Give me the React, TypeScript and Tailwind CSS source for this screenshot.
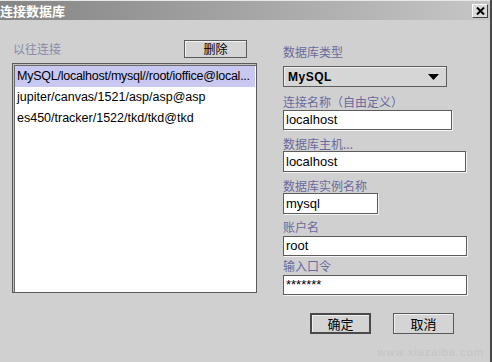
import React from "react";

const cjk = { fontFamily: '"Noto Sans CJK SC", "Noto Sans", sans-serif' };
const latin = { fontFamily: '"Liberation Sans", Arial, "Noto Sans CJK SC", sans-serif' };

function Label({ children, mt }: { children: React.ReactNode; mt: string }) {
  return (
    <div className={`${mt} h-[14px] text-[12px] leading-[14px] text-[#6a6a9c]`} style={cjk}>
      {children}
    </div>
  );
}

function Field({ value, w, h, mt }: { value: string; w: string; h: string; mt: string }) {
  return (
    <div
      className={`${mt} ${w} ${h} bg-white border border-[#5c5c5c] shadow-[1px_1px_0_#f4f4f4] flex items-center pl-[2px] text-[13px] text-black`}
      style={latin}
    >
      {value}
    </div>
  );
}

export default function App() {
  return (
    <div className="w-[492px] h-[362px] bg-[#d0d0d0] flex flex-col border-r-2 border-[#4a4a4a] relative overflow-hidden">
      {/* title bar */}
      <div className="h-[20px] flex items-center justify-between bg-gradient-to-r from-[#858585] to-[#c6c6c6] border-t border-[#e8e8e8]">
        <span className="text-white font-bold text-[13px] leading-[19px]" style={cjk}>
          连接数据库
        </span>
        <div className="mr-[2px] w-[16px] h-[14px] bg-[#dadada] border border-t-white border-l-white border-r-[#404040] border-b-[#404040] flex items-center justify-center">
          <svg width="9" height="8" viewBox="0 0 9 8">
            <path d="M1 0.5 L8 7.5 M8 0.5 L1 7.5" stroke="#000" strokeWidth="2" />
          </svg>
        </div>
      </div>

      {/* body */}
      <div className="flex flex-1">
        {/* left */}
        <div className="w-[257px] pl-[12px] pt-[20px] flex flex-col">
          <div className="flex items-center justify-between h-[18px]">
            <span className="text-[12px] text-[#8a8aa8] ml-[1px]" style={cjk}>
              以往连接
            </span>
            <button
              className="w-[63px] h-[18px] bg-[#d4d4d4] border border-[#5a5a5a] shadow-[inset_1px_1px_0_#f2f2f2] text-[12px] text-black flex items-center justify-center mr-[10px]"
              style={cjk}
            >
              删除
            </button>
          </div>
          <div className="mt-[5px] w-[245px] h-[230px] bg-white border border-[#5a5a5a] shadow-[inset_1px_1px_0_#c0c0c0,inset_2px_2px_0_#6a6a6a] pt-[2px] pl-[2px] text-[12.5px] text-black" style={latin}>
            <div className="h-[21px] bg-[#c8c8f0] flex items-center pl-[2px] whitespace-nowrap overflow-hidden mr-[1px] tracking-[-0.25px]">
              MySQL/localhost/mysql//root/ioffice@local...
            </div>
            <div className="h-[21px] flex items-center pl-[2px]">jupiter/canvas/1521/asp/asp@asp</div>
            <div className="h-[21px] flex items-center pl-[2px]">es450/tracker/1522/tkd/tkd@tkd</div>
          </div>
        </div>

        {/* right */}
        <div className="ml-[26px] flex flex-col">
          <Label mt="mt-[25px]">数据库类型</Label>
          <div
            className="mt-[7px] w-[164px] h-[21px] bg-[#d6d6d6] border border-[#5c5c5c] shadow-[inset_1px_1px_0_#f0f0f0] flex items-center justify-between pl-[4px] pr-[7px] text-[12px] text-black"
            style={latin}
          >
            <span className="font-bold tracking-[0.5px]">MySQL</span>
            <svg width="11" height="6" viewBox="0 0 11 6">
              <path d="M0 0 H11 L5.5 6 Z" fill="#000" />
            </svg>
          </div>
          <Label mt="mt-[8px]">连接名称（自由定义）</Label>
          <Field mt="mt-[1px]" w="w-[169px]" h="h-[20px]" value="localhost" />
          <Label mt="mt-[7px]">数据库主机...</Label>
          <Field mt="mt-0" w="w-[183px]" h="h-[21px]" value="localhost" />
          <Label mt="mt-[7px]">数据库实例名称</Label>
          <Field mt="mt-0" w="w-[95px]" h="h-[21px]" value="mysql" />
          <Label mt="mt-[6px]">账户名</Label>
          <Field mt="mt-[2px]" w="w-[184px]" h="h-[20px]" value="root" />
          <Label mt="mt-[3px]">输入口令</Label>
          <Field mt="mt-[2px]" w="w-[184px]" h="h-[20px]" value="*******" />
          <div className="mt-[18px] flex">
            <button
              className="ml-[27px] w-[61px] h-[21px] bg-[#d4d4d4] border-2 border-[#4a4a4a] shadow-[inset_1px_1px_0_#f0f0f0] text-[13px] text-black flex items-center justify-center"
              style={cjk}
            >
              确定
            </button>
            <button
              className="ml-[22px] w-[61px] h-[21px] bg-[#d4d4d4] border border-[#5a5a5a] shadow-[inset_1px_1px_0_#f0f0f0] text-[13px] text-black flex items-center justify-center"
              style={cjk}
            >
              取消
            </button>
          </div>
        </div>
      </div>

      {/* watermark */}
      <div
        className="absolute right-[6px] bottom-[2px] text-[11px] text-[#c4c4c4] tracking-[1px] pointer-events-none"
        style={latin}
      >
        www.xiazaiba.com
      </div>
    </div>
  );
}
